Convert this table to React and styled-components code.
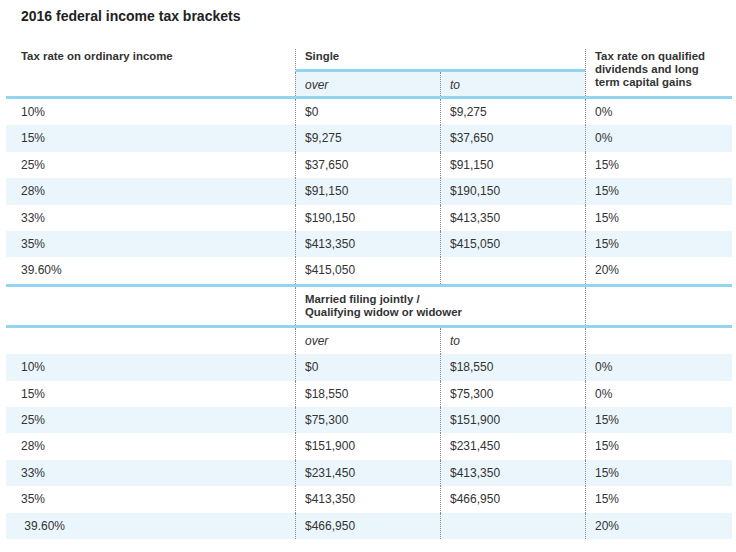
import React from "react";
import styled, { createGlobalStyle } from "styled-components";

const BLUE = "#93d5f0";
const TINT = "#eaf6fc";
const DOT = "1px dotted #8a8a8a";
const COLS = "289px 145px 145px 147px";

const Global = createGlobalStyle`
  html, body { margin: 0; padding: 0; background: #fff; }
  body { font-family: "Liberation Sans", Arial, sans-serif; color: #333; }
`;

const Page = styled.div`
  padding: 0 4px 0 6px;
  width: 726px;
`;

const Title = styled.h1`
  margin: 0;
  padding: 8px 0 0 15px;
  height: 49px;
  box-sizing: border-box;
  font-size: 14px;
  line-height: 16px;
  font-weight: bold;
  color: #222;
`;

const Table = styled.div`
  display: flex;
  flex-direction: column;
`;

const HeadGrid = styled.div`
  display: grid;
  grid-template-columns: ${COLS};
  grid-template-rows: ${(p) => p.$rows};
  border-bottom: 3px solid ${BLUE};
`;

const HeadCell = styled.div`
  grid-column: ${(p) => p.$col};
  grid-row: ${(p) => p.$row || "auto"};
  box-sizing: border-box;
  padding: ${(p) => p.$pad || "1px 9px 0"};
  font-size: 11.4px;
  line-height: 13px;
  font-weight: bold;
  color: #333;
  border-left: ${(p) => (p.$dot ? DOT : "none")};
  border-bottom: ${(p) => (p.$rule ? `3px solid ${BLUE}` : "none")};
  background: ${(p) => (p.$tint ? TINT : "transparent")};
`;

const SubCell = styled.div`
  grid-column: ${(p) => p.$col};
  grid-row: ${(p) => p.$row || "auto"};
  box-sizing: border-box;
  padding: ${(p) => p.$pad || "6px 9px"};
  font-size: 12px;
  line-height: 14.4px;
  font-style: italic;
  color: #333;
  border-left: ${(p) => (p.$dot ? DOT : "none")};
  background: ${(p) => (p.$tint ? TINT : "transparent")};
`;

const Row = styled.div`
  display: grid;
  grid-template-columns: ${COLS};
  background: ${(p) => (p.$tint ? TINT : "#fff")};
  border-bottom: ${(p) => (p.$rule ? `3px solid ${BLUE}` : "none")};
`;

const Cell = styled.div`
  box-sizing: border-box;
  padding: 6px 9px;
  font-size: 12px;
  line-height: 14.4px;
  color: #333;
  white-space: pre;
  &:first-child { padding-left: 15px; }
  & + & { border-left: ${DOT}; }
`;

const single = [
  ["10%", "$0", "$9,275", "0%"],
  ["15%", "$9,275", "$37,650", "0%"],
  ["25%", "$37,650", "$91,150", "15%"],
  ["28%", "$91,150", "$190,150", "15%"],
  ["33%", "$190,150", "$413,350", "15%"],
  ["35%", "$413,350", "$415,050", "15%"],
  ["39.60%", "$415,050", "", "20%"],
];

const married = [
  ["10%", "$0", "$18,550", "0%"],
  ["15%", "$18,550", "$75,300", "0%"],
  ["25%", "$75,300", "$151,900", "15%"],
  ["28%", "$151,900", "$231,450", "15%"],
  ["33%", "$231,450", "$413,350", "15%"],
  ["35%", "$413,350", "$466,950", "15%"],
  ["\u00a039.60%", "$466,950", "", "20%"],
];

const DataRows = ({ rows, tintOdd, ruleLast }) =>
  rows.map((r, i) => (
    <Row
      key={i}
      $tint={tintOdd ? i % 2 === 1 : i % 2 === 0}
      $rule={ruleLast && i === rows.length - 1}
    >
      {r.map((c, j) => (
        <Cell key={j}>{c}</Cell>
      ))}
    </Row>
  ));

export default function App() {
  return (
    <>
      <Global />
      <Page>
        <Title>2016 federal income tax brackets</Title>
        <Table>
          <HeadGrid $rows="23px 24px">
            <HeadCell $col="1" $row="1 / 3" $pad="1px 15px 0">
              Tax rate on ordinary income
            </HeadCell>
            <HeadCell $col="2 / 4" $row="1" $dot $rule>
              Single
            </HeadCell>
            <SubCell $col="2" $row="2" $dot $tint $pad="6px 9px 0">
              over
            </SubCell>
            <SubCell $col="3" $row="2" $dot $tint $pad="6px 9px 0">
              to
            </SubCell>
            <HeadCell $col="4" $row="1 / 3" $dot>
              Tax rate on qualified
              <br />
              dividends and long
              <br />
              term capital gains
            </HeadCell>
          </HeadGrid>
          <DataRows rows={single} tintOdd ruleLast />

          <HeadGrid $rows="38px">
            <HeadCell $col="1" />
            <HeadCell $col="2 / 4" $dot $pad="6px 9px">
              Married filing jointly /
              <br />
              Qualifying widow or widower
            </HeadCell>
            <HeadCell $col="4" $dot />
          </HeadGrid>
          <Row>
            <Cell />
            <Cell as={SubCell}>over</Cell>
            <Cell as={SubCell}>to</Cell>
            <Cell />
          </Row>
          <DataRows rows={married} />
        </Table>
      </Page>
    </>
  );
}
